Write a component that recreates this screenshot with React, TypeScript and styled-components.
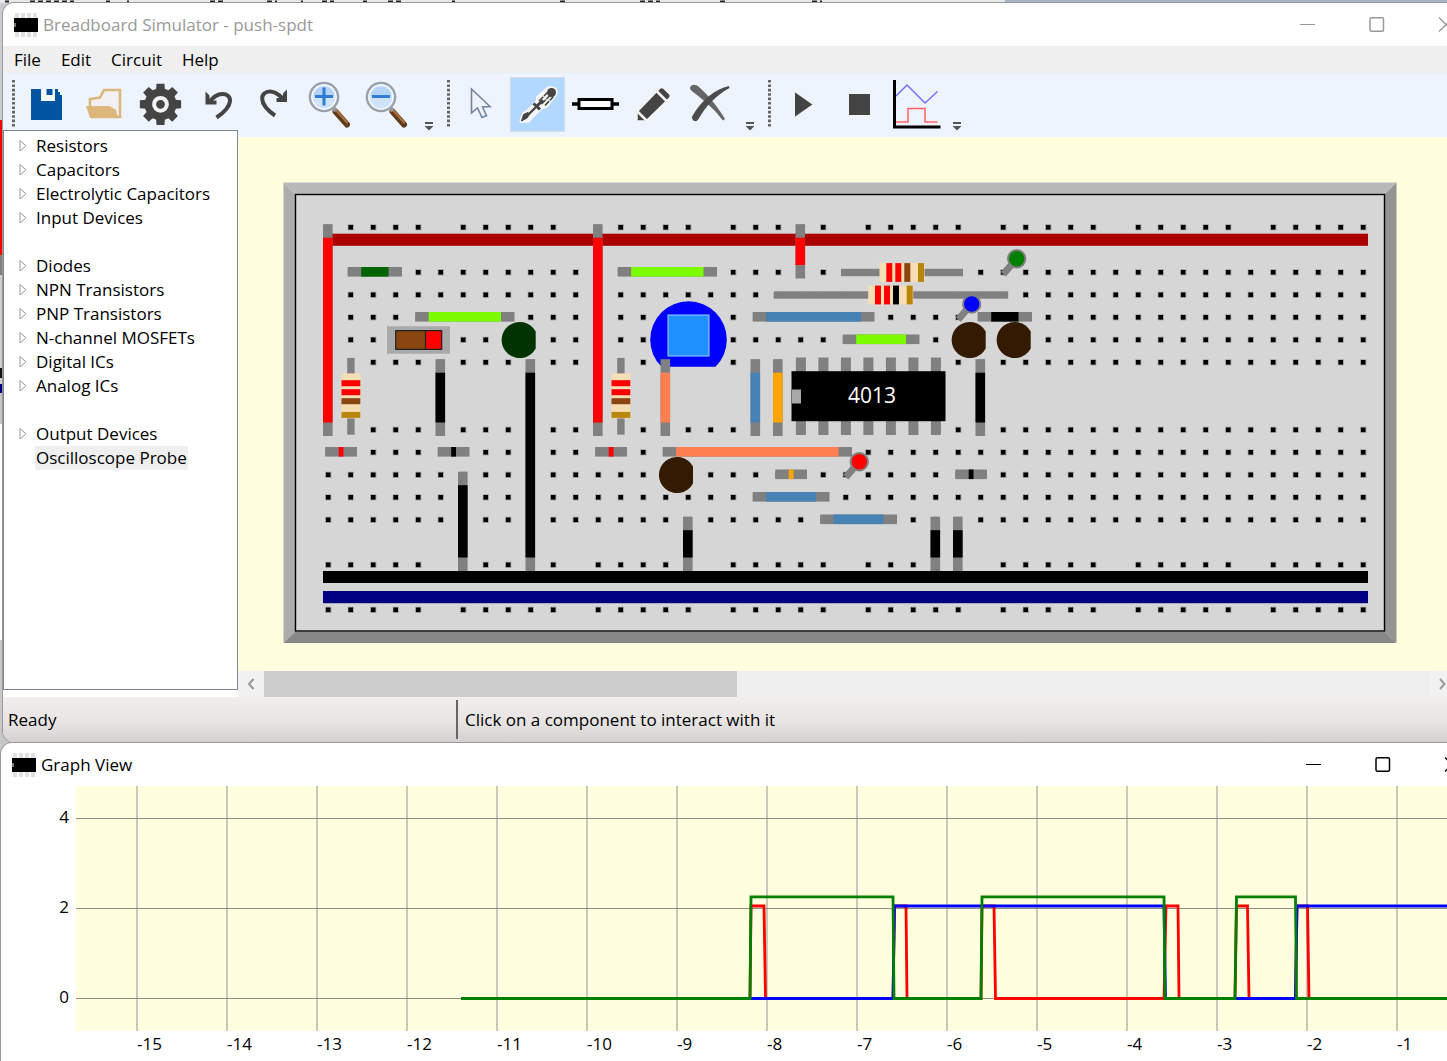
import React from "react";
import styled, { createGlobalStyle, css } from "styled-components";

const GlobalStyle = createGlobalStyle`
  *, *::before, *::after { box-sizing: border-box; }
  body {
    margin: 0;
    overflow: hidden;
    font-family: "Open Sans", "Noto Sans", sans-serif;
    font-size: 17px;
    line-height: 24px;
    color: #000;
  }
  button { font: inherit; color: inherit; background: none; border: 0; padding: 0; }
  svg { display: block; flex: none; }
`;

const Desktop = styled.div`
  position: relative;
  display: flex;
  flex-direction: column;
  gap: 1px;
  min-height: 100vh;
  padding-top: 3px;
  overflow: hidden;
  background: linear-gradient(
    #c9cdd2 0 120px, #f00 120px 255px, #808080 255px 275px, #cfcfcf 275px 368px,
    #111 368px 378px, #cfcfcf 378px 384px, #000080 384px 393px, #c4c4c4 393px 424px,
    #fff 424px 640px, #c8c8c8 640px
  );
`;

const BackdropText = styled.svg`
  position: absolute;
  left: 0;
  top: 0;
`;

const Window = styled.section<{ $inset: number; $bleed: number; $grow?: boolean }>`
  position: relative;
  display: flex;
  flex-direction: column;
  flex: ${(p) => (p.$grow ? 1 : "none")};
  margin-left: ${(p) => p.$inset}px;
  margin-right: -${(p) => p.$bleed}px;
  border-radius: 11px 0 0 ${(p) => (p.$grow ? 0 : 11)}px;
  background: #fff;
  box-shadow: 0 0 0 1px #9a9a9a;
  overflow: hidden;
`;

const TitleBar = styled.header<{ $active?: boolean }>`
  display: flex;
  align-items: center;
  height: 43px;
  padding-left: 11px;
  color: ${(p) => (p.$active ? "#000" : "#999")};
`;

const Title = styled.h1`
  flex: 1;
  margin: 0;
  padding-left: 5px;
  font-size: 17px;
  font-weight: 400;
  line-height: 24px;
`;

const CaptionButton = styled.button`
  display: flex;
  align-items: center;
  justify-content: center;
  width: 69px;
  height: 43px;
`;

const MenuBar = styled.nav`
  display: flex;
  height: 27px;
  align-items: center;
  padding-left: 1px;
  background: #efefef;
`;

const MenuItem = styled.button`
  padding: 0 10px;
  line-height: 27px;
`;

const ToolBar = styled.div`
  display: flex;
  gap: 12px;
  height: 64px;
  padding: 4px 0 0 9px;
  background: #edf4fd;
`;

const ToolGroup = styled.div`
  display: flex;
`;

const Tools = styled.div`
  display: flex;
  gap: 2px;
  margin: 0 6px 0 3px;
`;

const ToolButton = styled.button<{ $selected?: boolean }>`
  width: 55px;
  height: 55px;
  ${(p) =>
    p.$selected &&
    css`
      background: #b3d8ff;
      box-shadow: inset 0 0 0 1px #d5dee8;
    `}
`;

const OverflowButton = styled.button`
  align-self: flex-start;
  width: 14px;
  height: 55px;
`;

const Workspace = styled.div`
  display: flex;
  align-items: stretch;
`;

const Sidebar = styled.aside`
  flex: none;
  width: 235px;
  margin-top: -7px;
  padding-bottom: 7px;
  background: #fff;
`;

const Tree = styled.ul`
  height: 100%;
  margin: 0;
  padding: 3px 0 0 15px;
  border: 1px solid #7f8590;
  list-style: none;
  background: #fff;
`;

const TreeRow = styled.li`
  display: flex;
  align-items: center;
  gap: 8px;
  height: 24px;
`;

const TreeLabel = styled.button<{ $selected?: boolean }>`
  padding: 0 1px;
  line-height: 24px;
  background: ${(p) => (p.$selected ? "#efefef" : "transparent")};
`;

const CanvasPane = styled.main`
  flex: 1;
  min-width: 0;
  padding-right: 24px;
  background: #ffffdf;
`;

const CanvasView = styled.div`
  overflow: hidden;
`;

const ScrollBar = styled.div`
  display: flex;
  height: 26px;
  background: #efefef;
`;

const ScrollButton = styled.button`
  display: flex;
  align-items: center;
  justify-content: center;
  width: 26px;
  background: #f1f1f1;
`;

const ScrollTrack = styled.div`
  flex: 1;
`;

const ScrollThumb = styled.div`
  width: 473px;
  height: 26px;
  background: #cdcdcd;
`;

const StatusBar = styled.footer`
  display: flex;
  align-items: center;
  height: 45px;
  padding-left: 5px;
  background: linear-gradient(#f1eeed, #e7e4e3 55%, #d4d1d0);
`;

const StatusText = styled.span`
  flex: none;
  width: 448px;
  line-height: 39px;
`;

const StatusDetail = styled.span`
  padding-left: 7px;
  border-left: 2px solid #666;
  line-height: 39px;
`;

const Plot = styled.figure`
  margin: 0;
  overflow: hidden;
`;

/* ---------- small drawings ---------- */

const ChipIcon = () => (
  <svg width="24" height="24" viewBox="0 0 24 24">
    {[1, 7, 13, 19].map((x) => (
      <rect key={x} x={x} y="0" width="4" height="24" fill="#e0e0e0" />
    ))}
    <rect y="5" width="24" height="14" />
    <rect y="10" width="2" height="4" fill="#777" />
  </svg>
);

const Caption = () => (
  <>
    <CaptionButton aria-label="Minimize">
      <svg width="16" height="16" stroke="currentColor"><path d="M0 7.500h15" /></svg>
    </CaptionButton>
    <CaptionButton aria-label="Maximize">
      <svg width="16" height="16" fill="none" stroke="currentColor" strokeWidth="1.500">
        <rect x="1" y="0.800" width="13.500" height="13.500" rx="1.500" />
      </svg>
    </CaptionButton>
    <CaptionButton aria-label="Close">
      <svg width="16" height="16" stroke="currentColor" strokeWidth="1.300">
        <path d="M1 .5l14 14M15 .5l-14 14" />
      </svg>
    </CaptionButton>
  </>
);

const Grip = () => (
  <svg width="3" height="55">
    <path d="M1.500 3v47" stroke="#666" strokeWidth="3" strokeDasharray="2.600 1.800" />
  </svg>
);

const Overflow = ({ label }: { label: string }) => (
  <OverflowButton aria-label={label}>
    <svg width="14" height="55" fill="#555">
      <path d="M4 45h8v2h-8zM3.500 49h9l-4.500 4.500z" />
    </svg>
  </OverflowButton>
);

const Glyph = ({ children }: { children: React.ReactNode }) => (
  <svg width="55" height="55" viewBox="0 0 55 55" fill="none">{children}</svg>
);

const gearPath = (() => {
  const pts: string[] = [];
  for (let t = 0; t < 8; t++) {
    const a = (t * Math.PI) / 4;
    [[-0.3, 15], [-0.19, 21], [0.19, 21], [0.3, 15]].forEach(([d, r]) => {
      pts.push(`${(28.5 + r * Math.sin(a + d)).toFixed(2)} ${(27.3 - r * Math.cos(a + d)).toFixed(2)}`);
    });
  }
  return `M${pts.join("L")}Z`;
})();

const Lens = ({ plus }: { plus?: boolean }) => (
  <Glyph>
    <path d="M32.500 34.500l11.500 13" stroke="#5e3a1c" strokeWidth="6" strokeLinecap="round" />
    <path d="M33 33l11 12.500" stroke="#a9713f" strokeWidth="2.200" strokeLinecap="round" />
    <path d="M29 29l4 5" stroke="#999" strokeWidth="4" />
    <circle cx="21" cy="20" r="14" fill="#cfe4fb" stroke="#9aa1aa" strokeWidth="2.600" />
    <circle cx="21" cy="20" r="12" stroke="#f4f8fc" strokeWidth="1.600" />
    <path d="M10.500 20a10.500 10.500 0 0 1 21 0c-6-3-15-3-21 0z" fill="#b3d4f8" />
    <path d={plus ? "M12 19.500h18M21 10.500v18" : "M12 19.500h18"} stroke="#2f7bd6" strokeWidth="3" />
  </Glyph>
);

const fileTools: [string, React.ReactNode][] = [
  ["Save", (
    <Glyph>
      <path d="M13 12h10v12h14V12h3v3h2v3h2v25H13z" fill="#0054a0" />
      <path d="M23 12h14v12H23z" fill="#f3f5f8" />
      <path d="M28.500 12h6v6h-6z" fill="#0054a0" />
    </Glyph>
  )],
  ["Open", (
    <Glyph>
      <path d="M15 29V22l10-1.500 4-7.500H45V40H17z" fill="#f1f0f2" stroke="#ddb67c" strokeWidth="2.600" />
      <path d="M11 29H34.500L41 33L43 41H15z" fill="#ddb67c" />
    </Glyph>
  )],
  ["Settings", (
    <Glyph>
      <path d={gearPath} fill="#444" />
      <circle cx="28.500" cy="27.300" r="16" fill="#444" />
      <circle cx="28.500" cy="27.300" r="6.400" fill="#444" stroke="#eef2f6" strokeWidth="4" />
    </Glyph>
  )],
  ["Undo", (
    <Glyph>
      <path d="M27.500 40.500C46 28 43 17 33.500 17c-6 0-9 3.500-13.500 8" stroke="#444" strokeWidth="4" />
      <path d="M16.500 14.500L20.500 18.500V23.500H27.500V27.500H16.500z" fill="#444" />
    </Glyph>
  )],
  ["Redo", (
    <Glyph>
      <path d="M29 38.500C11 26 14.500 14.500 24 14.500c6 0 9 3.500 13 7" stroke="#444" strokeWidth="4" />
      <path d="M41 12.500L37 16.500V21H30.500V25H41z" fill="#444" />
    </Glyph>
  )],
  ["Zoom in", <Lens plus />],
  ["Zoom out", <Lens />],
];

const editTools: [string, React.ReactNode][] = [
  ["Select", (
    <Glyph>
      <path d="M18.500 12V36l6-5 4.500 9.500 4.500-2-4-8.500 7.500-.5z" fill="#eef2f9" stroke="#74849e" strokeWidth="1.600" />
    </Glyph>
  )],
  ["Interact", (
    <Glyph>
      <g strokeLinejoin="round">
        <path d="M11.500 44l2.500-7 4-2.500 10-10 0-4 11-9.500q7 0 7 5l-10 13-4 1-10.500 9.500-3 4z" fill="#f6f6f4" stroke="#f6f6f4" strokeWidth="4" />
        <path d="M11.500 44l2-6.500 4.500-2 1.500 1.500-2.500 4z" fill="#444" stroke="#444" />
        <path d="M17 39L28 28" stroke="#444" strokeWidth="2.400" />
        <path d="M23.500 26.500l6.500 6M26 30l7-7" stroke="#444" strokeWidth="3" />
        <path d="M29 24l9-9M31.500 27l10-10M35 28.500l8.500-9" stroke="#444" strokeWidth="1.600" strokeDasharray="6 1" />
        <circle cx="41.500" cy="15.500" r="4.500" fill="#444" />
      </g>
    </Glyph>
  )],
  ["Place component", (
    <Glyph>
      <path d="M5 27h47" stroke="#000" strokeWidth="3.500" />
      <path d="M12 22.500h33v9H12z" fill="#fff" stroke="#000" strokeWidth="3" />
    </Glyph>
  )],
  ["Draw", (
    <Glyph>
      <path d="M13 44V35l23-24q2-1 4 .5l6 6q1 2-.5 3.500L22 44z" fill="#444" stroke="#f3f4f4" strokeWidth="1.500" />
      <path d="M13.500 34.500l9.500 9.500M32 13.500l11 11" stroke="#f3f4f4" strokeWidth="2.500" />
    </Glyph>
  )],
  ["Delete", (
    <Glyph>
      <path d="M9 11C10 7 15 7 18 10C28 19 37 30 44 42L42 43.500C33 32 25 25 12 15Q9 13 9 11z" fill="#666" />
      <path d="M48 9L48.500 11C34 19 25 29 17.500 42Q15 46 12 43Q10 41 12 38C21 23 34 12 48 9z" fill="#4c4c4c" />
    </Glyph>
  )],
];

const runTools: [string, React.ReactNode][] = [
  ["Run", <Glyph><path d="M20.500 14.500L39 27.500L20.500 40.500z" fill="#444" stroke="#f3f3f3" /></Glyph>],
  ["Stop", <Glyph><path d="M17.500 16.500h22v22h-22z" fill="#444" stroke="#f3f3f3" /></Glyph>],
  ["Graph", (
    <Glyph>
      <path d="M8 19L19 8L37 26L49.500 14.500" stroke="#7272ff" strokeWidth="1.500" />
      <path d="M8 45H20V31.500H37V45H49.500" stroke="#ff6060" strokeWidth="1.500" />
      <path d="M6.500 3V50H52.500" stroke="#000" strokeWidth="3" />
    </Glyph>
  )],
];

const ToolSet = ({ tools, more, selected }: { tools: [string, React.ReactNode][]; more: string; selected?: string }) => (
  <ToolGroup>
    <Grip />
    <Tools>
      {tools.map(([name, icon]) => (
        <ToolButton key={name} aria-label={name} $selected={name === selected}>{icon}</ToolButton>
      ))}
    </Tools>
    <Overflow label={more} />
  </ToolGroup>
);

/* ---------- component tree ---------- */

const parts = [
  "Resistors", "Capacitors", "Electrolytic Capacitors", "Input Devices", "",
  "Diodes", "NPN Transistors", "PNP Transistors", "N-channel MOSFETs", "Digital ICs", "Analog ICs", "",
  "Output Devices", "Oscilloscope Probe",
];

/* ---------- breadboard ---------- */

const hx = (col: number) => 328.2 + 22.5 * col;
const hy = (row: number) => 227.2 + 22.5 * row;

const GREEN = "#7cfc00";
const BLUE = "#4682b4";
const CORAL = "#ff7f50";

type WireSpec = [number, number, number, number, string];
const wires: WireSpec[] = [
  [0, 0, 0, 9, "#f00"], [12, 0, 12, 9, "#f00"], [21, 0, 21, 2, "#f00"],
  [1, 2, 3, 2, "#006400"], [4, 4, 8, 4, GREEN], [13, 2, 17, 2, GREEN],
  [5, 6, 5, 9, "#000"], [9, 6, 9, 15, "#000"], [6, 11, 6, 15, "#000"],
  [0, 10, 1, 10, "#f00"], [5, 10, 6, 10, "#000"], [12, 10, 13, 10, "#f00"],
  [15, 6, 15, 9, CORAL], [19, 6, 19, 9, BLUE], [20, 6, 20, 9, "#ffa500"],
  [29, 6, 29, 9, "#000"], [19, 4, 24, 4, BLUE], [23, 5, 26, 5, GREEN],
  [29, 4, 31, 4, "#000"], [15, 10, 23, 10, CORAL], [20, 11, 21, 11, "#ffa500"],
  [28, 11, 29, 11, "#000"], [19, 12, 22, 12, BLUE], [22, 13, 25, 13, BLUE],
  [16, 13, 16, 15, "#000"], [27, 13, 27, 15, "#000"], [28, 13, 28, 15, "#000"],
];

const Wire = ({ spec: [c0, r0, c1, r1, color] }: { spec: WireSpec }) => {
  if (c0 === c1) {
    const y = hy(r0) - 3;
    const len = hy(r1) + 6.3 - y;
    return (
      <>
        <rect x={hx(c0) - 5.2} y={y} width="9.600" height={len} fill="#808080" />
        <rect x={hx(c0) - 5.2} y={y + 13.5} width="9.600" height={len - 27} fill={color} />
      </>
    );
  }
  const x = hx(c0) - 3;
  const len = hx(c1) + 6.3 - x;
  return (
    <>
      <rect x={x} y={hy(r0) - 5.2} width={len} height="9.600" fill="#808080" />
      <rect x={x + 13.5} y={hy(r0) - 5.2} width={len - 27} height="9.600" fill={color} />
    </>
  );
};

const Resistor = ({ x, y, lead, third, turned }: { x: number; y: number; lead: [number, number]; third: string; turned?: boolean }) => (
  <g transform={`translate(${x} ${y})${turned ? " rotate(90)" : ""}`}>
    <rect x={lead[0]} y="-3.700" width={lead[1] - lead[0]} height="7.400" fill="#808080" />
    <rect x="0" y="-9.400" width="45" height="18.800" fill="#f5deb3" />
    <rect x="6.800" y="-9.400" width="6" height="18.800" fill="#f00" />
    <rect x="15.800" y="-9.400" width="6" height="18.800" fill="#f00" />
    <rect x="24.800" y="-9.400" width="6" height="18.800" fill={third} />
    <rect x="38.500" y="-9.400" width="6" height="18.800" fill="#b8860b" />
  </g>
);

const Lamp = ({ x, y, fill }: { x: number; y: number; fill: string }) => (
  <path d={`M${x + 16} ${y - 8.5}A18.100 18.100 0 1 0 ${x + 16} ${y + 8.5}z`} fill={fill} />
);

const Probe = ({ x, y, fill }: { x: number; y: number; fill: string }) => (
  <>
    <path d={`M${x} ${y}L${x - 13.500} ${y + 15.500}`} stroke="#808080" strokeWidth="7" />
    <circle cx={x} cy={y} r="8.700" fill={fill} stroke="#808080" strokeWidth="2" />
  </>
);

const Holes = () => {
  const dots: React.ReactNode[] = [];
  [0, 2, 3, 4, 5, 6, 9, 10, 11, 12, 13, 15, 17].forEach((row) => {
    const rail = row === 0 || row >= 15;
    for (let col = 0; col < 47; col++) {
      if (rail && col % 6 === 5) continue;
      dots.push(
        <g key={`${row}-${col}`}>
          <rect x={hx(col) - 3} y={hy(row) - 3} width="6.200" height="6.200" fill="#a6a6a6" />
          <rect x={hx(col) - 2.3} y={hy(row) - 2.2} width="4.600" height="4.600" />
        </g>
      );
    }
  });
  return <>{dots}</>;
};

const Breadboard = () => (
  <svg width="1218" height="534" viewBox="238 137 1218 534" role="img" aria-label="Breadboard">
    <path d="M283.500 182.500H1396.500L1384.500 194.500H295.500z" fill="#b9b9b9" />
    <path d="M283.500 182.500V643L295.500 631.500V194.500z" fill="#adadad" />
    <path d="M1396.500 182.500V643L1384.500 631.500V194.500z" fill="#949494" />
    <path d="M283.500 643H1396.500L1384.500 631.500H295.500z" fill="#888" />
    <rect x="295.500" y="194.500" width="1089" height="436.500" fill="#d6d6d6" stroke="#000" strokeWidth="1.400" />
    <Holes />
    <rect x="323" y="233.700" width="1045" height="12.100" fill="#a00" />
    <rect x="323" y="571" width="1045" height="12" fill="#000" />
    <rect x="323" y="591" width="1045" height="12.200" fill="#000080" />

    <rect x="387" y="326.300" width="63" height="27.400" fill="#a9a9a9" />
    <rect x="395.700" y="330.700" width="46" height="18.600" fill="#8b4513" />
    <rect x="425.500" y="330.700" width="16" height="18.600" fill="#f00" />
    <path d="M395.700 330.700h46v18.600h-46zM425.500 331v18" fill="none" stroke="#222" strokeWidth="1.200" />

    <path d="M661.500 366.800A38.300 38.300 0 1 1 715.500 366.800z" fill="#00f" />
    <rect x="668" y="315" width="41" height="41" fill="#1e90ff" stroke="#9fcdf5" />

    <Lamp x={519.700} y={340} fill="#003300" />
    <Lamp x={969.700} y={340} fill="#331a00" />
    <Lamp x={1014.700} y={340} fill="#331a00" />
    <Lamp x={677} y={475} fill="#331a00" />

    {wires.map((spec) => <Wire key={spec.join()} spec={spec} />)}

    <Resistor x={350.900} y={373.400} lead={[-15.500, 61.300]} third="#8b4513" turned />
    <Resistor x={620.900} y={373.400} lead={[-15.500, 61.300]} third="#8b4513" turned />
    <Resistor x={879.500} y={272.500} lead={[-38.500, 83.500]} third="#8b4513" />
    <Resistor x={868.200} y={295} lead={[-94.500, 140]} third="#000" />

    {[21, 22, 23, 24, 25, 26, 27].map((col) => (
      <rect key={col} x={hx(col) - 4.8} y="357.500" width="10" height="77.500" fill="#808080" />
    ))}
    <rect x="791.500" y="371.200" width="154" height="50" />
    <rect x="792" y="389.500" width="9" height="14" fill="#a9a9a9" />
    <text x="872" y="403" textAnchor="middle" fontSize="21" fill="#fff">4013</text>

    <Probe x={1016.700} y={258.800} fill="#008000" />
    <Probe x={971.700} y={304} fill="#00f" />
    <Probe x={859.300} y={461.700} fill="#f00" />
  </svg>
);

/* ---------- graph ---------- */

const seconds = Array.from({ length: 15 }, (_, i) => i - 15);

const Graph = () => (
  <svg width="1485" height="275" viewBox="1 786 1485 275" role="img" aria-label="Probe voltages over time" fontSize="17">
    <rect x="76" y="786" width="1410" height="245" fill="#ffffdf" />
    {seconds.map((s) => (
      <g key={s}>
        <path d={`M${1487 + s * 90} 786v245`} stroke="#c9c9ba" strokeWidth="2" />
        <text x={1487 + s * 90} y="1050">{s}</text>
      </g>
    ))}
    {[4, 2, 0].map((v) => (
      <g key={v}>
        <path d={`M76 ${998.500 - v * 45}H1486`} stroke="#8e8e88" />
        <text x="69" y={1003 - v * 45} textAnchor="end">{v}</text>
      </g>
    ))}
    <g fill="none" strokeWidth="2.800">
      <path
        stroke="#f00"
        d="M461 998.500H750L751 906H764L765.500 998.500H893L894.500 906H906L907 998.500H981L982 906H994L995.500 998.500H1164L1166 906H1178L1179 998.500H1235L1236.500 906H1247.500L1249 998.500H1295.500L1297 906H1307.500L1309 998.500H1486"
      />
      <path stroke="#00f" d="M461 998.500H893L894.500 906H1164L1165.500 998.500H1295.500L1297 906H1486" />
      <path
        stroke="#008000"
        d="M461 998.500H750L751 896.800H893L894 998.500H981L982 896.800H1164L1165 998.500H1235L1236.500 896.800H1295.500L1296.500 998.500H1486"
      />
    </g>
  </svg>
);

export default function App() {
  return (
    <Desktop>
      <GlobalStyle />
      <BackdropText width="1447" height="3" aria-hidden="true">
        <rect width="1005" height="3" fill="#e6e8ea" />
        <rect x="1005" width="442" height="3" fill="#a9b4c4" />
        <path d="M5 1.500h4M30 1.500h44M106 1.500h4M127 1.500h2M210 1.500h14M267 1.500h10M301 1.500h2M322 1.500h12M363 1.500h4M388 1.500h14M452 1.500h3M560 1.500h8M640 1.500h20M720 1.500h6M812 1.500h10" stroke="#222" strokeWidth="2" strokeDasharray="5 3" />
      </BackdropText>

      <Window $inset={3} $bleed={33}>
        <TitleBar>
          <ChipIcon />
          <Title>Breadboard Simulator - push-spdt</Title>
          <Caption />
        </TitleBar>
        <MenuBar>
          {["File", "Edit", "Circuit", "Help"].map((m) => <MenuItem key={m}>{m}</MenuItem>)}
        </MenuBar>
        <ToolBar>
          <ToolSet tools={fileTools} more="More file tools" />
          <ToolSet tools={editTools} more="More edit tools" selected="Interact" />
          <ToolSet tools={runTools} more="More simulation tools" />
        </ToolBar>
        <Workspace>
          <Sidebar>
            <Tree>
              {parts.map((name, i) => (
                <TreeRow key={i}>
                  {name && (
                    <svg width="8" height="12" fill="none" stroke="#999">
                      {name !== "Oscilloscope Probe" && <path d="M1 .5v10.500l6-5.200z" />}
                    </svg>
                  )}
                  {name && <TreeLabel $selected={name === "Oscilloscope Probe"}>{name}</TreeLabel>}
                </TreeRow>
              ))}
            </Tree>
          </Sidebar>
          <CanvasPane>
            <CanvasView><Breadboard /></CanvasView>
            <ScrollBar>
              <ScrollButton aria-label="Scroll left">
                <svg width="8" height="12" fill="none" stroke="#999" strokeWidth="2"><path d="M6.500 1L2 6l4.500 5" /></svg>
              </ScrollButton>
              <ScrollTrack><ScrollThumb /></ScrollTrack>
              <ScrollButton aria-label="Scroll right">
                <svg width="8" height="12" fill="none" stroke="#999" strokeWidth="2"><path d="M1 1L5.500 6l-4.500 5" /></svg>
              </ScrollButton>
            </ScrollBar>
          </CanvasPane>
        </Workspace>
        <StatusBar>
          <StatusText>Ready</StatusText>
          <StatusDetail>Click on a component to interact with it</StatusDetail>
        </StatusBar>
      </Window>

      <Window $inset={1} $bleed={39} $grow>
        <TitleBar $active>
          <ChipIcon />
          <Title>Graph View</Title>
          <Caption />
        </TitleBar>
        <Plot><Graph /></Plot>
      </Window>
    </Desktop>
  );
}
